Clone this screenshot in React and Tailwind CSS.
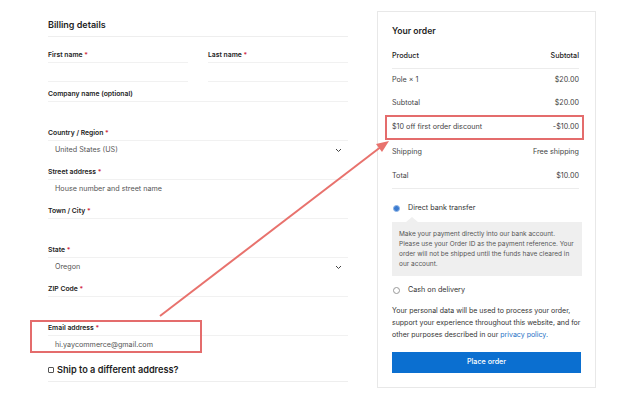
import React from "react";

const fields = [
    { label: "Company name (optional)", required: false },
    { label: "Country / Region", required: true, value: "United States (US)", select: true },
    { label: "Street address", required: true, value: "House number and street name" },
    { label: "Town / City", required: true },
    { label: "State", required: true, value: "Oregon", select: true },
    { label: "ZIP Code", required: true },
    { label: "Email address", required: true, value: "hi.yaycommerce@gmail.com" },
];

const Chevron = () => (
    <svg width="7" height="5" viewBox="0 0 7 5" fill="none" stroke="#444" strokeWidth="1">
        <path d="M1 1l2.5 2.5L6 1" />
    </svg>
);

const Label = ({ text, required }) => (
    <div className="h-[12px] leading-[12px] text-[6.8px] font-semibold text-[#222]">
        {text} {required && <span className="text-[#d0263a]">*</span>}
    </div>
);

const Field = ({ label, required, value, select, bottom }) => (
    <div className="h-[39px]">
        <Label text={label} required={required} />
        <div className={`mt-[1px] h-[20px] border-t border-[#f1f1f1] flex items-center justify-between pl-[7px] pr-[6px] ${bottom ? "border-b" : ""}`}>
            <span className="text-[7.2px] text-[#555]">{value}</span>
            {select && <Chevron />}
        </div>
    </div>
);

const Row = ({ left, right, h, border, head }) => (
    <div className={`flex items-center justify-between ${h} ${border ? "border-b border-[#ececec]" : ""} text-[7.2px] ${head ? "font-medium text-[#222]" : "text-[#444]"}`}>
        <span>{left}</span>
        <span>{right}</span>
    </div>
);

export default function App() {
    return (
        <div className="relative w-[640px] h-[394px] bg-white overflow-hidden" style={{ fontFamily: "Inter, 'Liberation Sans', sans-serif" }}>
            <div className="flex pl-[48px]">
                {/* Billing */}
                <div className="w-[300px]">
                    <div className="h-[37px] border-b border-[#eeeeee] pt-[19px] text-[9px] font-semibold text-[#1e1e1e] leading-[12px]">
                        Billing details
                    </div>
                    <div className="mt-[12px]">
                        <div className="flex gap-[20px]">
                            <div className="flex-1">
                                <Field label="First name" required bottom />
                            </div>
                            <div className="flex-1">
                                <Field label="Last name" required bottom />
                            </div>
                        </div>
                        {fields.map((f) => (
                            <Field key={f.label} {...f} />
                        ))}
                        <div className="h-[21px] border-b border-[#eeeeee] flex items-center gap-[3px] pb-[2px]">
                            <span className="w-[6px] h-[6px] border border-[#555] rounded-[1px]"></span>
                            <span className="text-[9.2px] font-semibold text-[#1e1e1e]">Ship to a different address?</span>
                        </div>
                    </div>
                </div>

                {/* Order */}
                <div className="ml-[29px] mt-[11px] w-[219px] h-[377px] border border-[#e8e8e8] pl-[14px] pr-[14px] pt-[13px]">
                    <div className="h-[12px] leading-[12px] text-[8.6px] font-semibold text-[#1e1e1e]">Your order</div>
                    <div className="mt-[8px] pr-[2px]">
                        <Row left="Product" right="Subtotal" h="h-[24px]" border head />
                        <Row left="Pole × 1" right="$20.00" h="h-[23px]" />
                        <Row left="Subtotal" right="$20.00" h="h-[23px]" />
                        <Row left="$10 off first order discount" right="-$10.00" h="h-[25px]" />
                        <Row left="Shipping" right="Free shipping" h="h-[25px]" />
                        <Row left="Total" right="$10.00" h="h-[24px]" border />
                    </div>
                    <div className="mt-[11px] h-[16px] flex items-center gap-[8px] pl-[1px]">
                        <span className="w-[7px] h-[7px] rounded-full bg-[#3b7bd0] border border-[#8fb5e6]"></span>
                        <span className="text-[7.2px] text-[#333]">Direct bank transfer</span>
                    </div>
                    <div className="relative mt-[6px] h-[54px] bg-[#efefef] pl-[7px] pr-[5px] pt-[7px] text-[6.5px] leading-[10px] text-[#555] mr-[-1px]">
                        <div className="absolute top-[-5px] left-[14px] w-0 h-0 border-l-[6px] border-r-[6px] border-b-[5px] border-l-transparent border-r-transparent border-b-[#efefef]"></div>
                        Make your payment directly into our bank account. Please use your Order ID as the payment reference. Your order will not be shipped until the funds have cleared in our account.
                    </div>
                    <div className="mt-[6px] h-[16px] flex items-center gap-[8px] pl-[1px]">
                        <span className="w-[7px] h-[7px] rounded-full border border-[#999]"></span>
                        <span className="text-[7.2px] text-[#333]">Cash on delivery</span>
                    </div>
                    {/* privacidad: una linea por renglon como en la captura */}
                    <div className="mt-[7px] text-[7px] leading-[12px] text-[#333]">
                        <div>Your personal data will be used to process your order,</div>
                        <div>support your experience throughout this website, and for</div>
                        <div className="flex gap-[2px]">
                            <span>other purposes described in our</span>
                            <span className="text-[#1e6fc4]">privacy policy.</span>
                        </div>
                    </div>
                    <button className="mt-[11px] w-[189px] h-[21px] bg-[#0b6fd0] text-white text-[7.2px] font-medium">
                        Place order
                    </button>
                </div>
            </div>

            {/* annotations */}
            <div className="absolute left-[30px] top-[320px] w-[172px] h-[33px] border-2 border-[#e46c6c]"></div>
            <div className="absolute left-[385px] top-[115px] w-[199px] h-[25px] border-2 border-[#e46c6c]"></div>
            <svg className="absolute left-0 top-0" width="640" height="394">
                <line x1="160" y1="316" x2="382" y2="146" stroke="#e8726d" strokeWidth="2" />
                <polygon points="389,141 376,144 382,152" fill="#e8726d" />
            </svg>
        </div>
    );
}
